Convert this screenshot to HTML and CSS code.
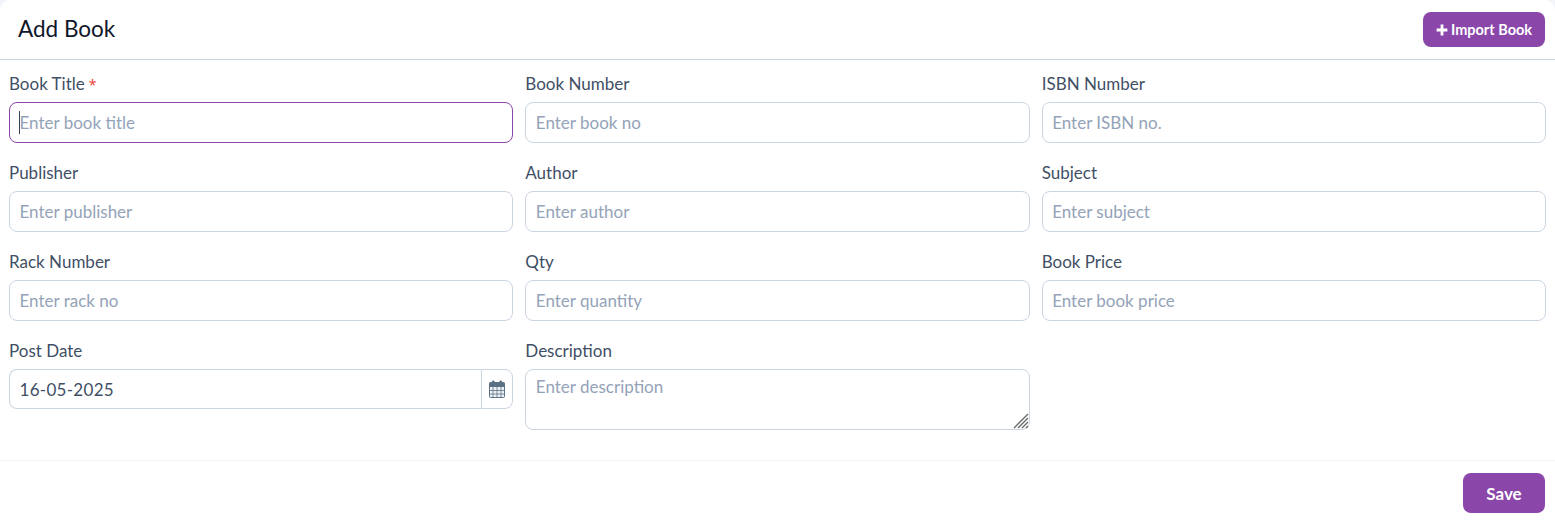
FILE: index.html
```html
<!DOCTYPE html>
<html lang="en">
<head>
    <meta charset="UTF-8">
    <title>Add Book</title>
    <link rel="stylesheet" href="styles.css">
</head>
<body>
    <div class="card">
        <!-- Header -->
        <div class="card-header">
            <h1 class="card-title">Add Book</h1>
            <a href="#" class="btn btn-import">
                <svg class="plus-icon" viewBox="0 0 12 12" aria-hidden="true"><path d="M4.6 0.6h2.8v4h4v2.8h-4v4H4.6v-4h-4V4.6h4z"/></svg>
                Import Book
            </a>
        </div>

        <!-- Form -->
        <form class="card-body">
            <div class="form-group">
                <label for="title">Book Title<span class="required">*</span></label>
                <div class="field">
                    <input id="title" class="form-control" type="text" placeholder="Enter book title" autofocus>
                    <span class="caret"></span>
                </div>
            </div>
            <div class="form-group">
                <label for="number">Book Number</label>
                <input id="number" class="form-control" type="text" placeholder="Enter book no">
            </div>
            <div class="form-group">
                <label for="isbn">ISBN Number</label>
                <input id="isbn" class="form-control" type="text" placeholder="Enter ISBN no.">
            </div>
            <div class="form-group">
                <label for="publisher">Publisher</label>
                <input id="publisher" class="form-control" type="text" placeholder="Enter publisher">
            </div>
            <div class="form-group">
                <label for="author">Author</label>
                <input id="author" class="form-control" type="text" placeholder="Enter author">
            </div>
            <div class="form-group">
                <label for="subject">Subject</label>
                <input id="subject" class="form-control" type="text" placeholder="Enter subject">
            </div>
            <div class="form-group">
                <label for="rack">Rack Number</label>
                <input id="rack" class="form-control" type="text" placeholder="Enter rack no">
            </div>
            <div class="form-group">
                <label for="qty">Qty</label>
                <input id="qty" class="form-control" type="text" placeholder="Enter quantity">
            </div>
            <div class="form-group">
                <label for="price">Book Price</label>
                <input id="price" class="form-control" type="text" placeholder="Enter book price">
            </div>
            <div class="form-group">
                <label for="date">Post Date</label>
                <div class="input-group">
                    <input id="date" class="form-control date-input" type="text" value="16-05-2025">
                    <span class="input-addon">
                        <svg class="calendar-icon" viewBox="0 0 16 18" aria-hidden="true">
                            <rect class="cal-frame" x="0.5" y="2.5" width="15" height="15" rx="1"/>
                            <rect class="cal-band" x="0.5" y="2.5" width="15" height="4.5"/>
                            <rect class="cal-band" x="3" y="0.5" width="2.5" height="4.5" rx="1"/>
                            <rect class="cal-band" x="10.5" y="0.5" width="2.5" height="4.5" rx="1"/>
                            <path class="cal-grid" d="M4 7v10M8 7v10M12 7v10M1 10.5h14M1 14h14"/>
                        </svg>
                    </span>
                </div>
            </div>
            <div class="form-group">
                <label for="description">Description</label>
                <div class="field">
                    <textarea id="description" class="form-control form-textarea" placeholder="Enter description"></textarea>
                    <svg class="grip" viewBox="0 0 16 16" aria-hidden="true">
                        <path d="M1 15L15 1M5 15L15 5M9 15l6-6M13 15l2-2"/>
                    </svg>
                </div>
            </div>
        </form>

        <!-- Footer -->
        <div class="card-footer">
            <button type="button" class="btn btn-save">Save</button>
        </div>
    </div>
</body>
</html>
```

FILE: styles.css
```css
body {
    background-color: #f1f5f9;
    font-family: Lato, "Noto Sans", Arial, sans-serif;
    margin: 0;
    padding: 0;
    color: #334155;
}

.card {
    background-color: #fff;
    border-radius: 10px 10px 0 0;
    height: 522px;
    box-sizing: border-box;
    overflow: hidden;
}

/* Header */
.card-header {
    display: flex;
    justify-content: space-between;
    align-items: center;
    height: 60px;
    box-sizing: border-box;
    padding: 0 10px 0 18px;
    border-bottom: 1px solid #cbd5e1;
}

.card-title {
    margin: 0 0 3px;
    font-size: 22.5px;
    font-weight: 400;
    color: #0f172a;
}

.btn {
    background-color: #8a46a9;
    color: #fff;
    border: none;
    border-radius: 8px;
    text-decoration: none;
    font-family: inherit;
    font-weight: 700;
    display: flex;
    align-items: center;
    justify-content: center;
}

.btn-import {
    width: 122px;
    height: 35px;
    font-size: 14.5px;
    gap: 3px;
}

.plus-icon {
    width: 12px;
    height: 12px;
    fill: #fff;
}

/* Form grid */
.card-body {
    display: grid;
    grid-template-columns: repeat(3, 1fr);
    column-gap: 12px;
    grid-auto-rows: 89px;
    padding: 13px 9px 0;
    height: 400px;
    box-sizing: border-box;
    align-content: start;
}

.form-group {
    display: flex;
    flex-direction: column;
}

.form-group label {
    font-size: 17px;
    line-height: 22px;
    margin-bottom: 7px;
    color: #3f4f66;
}

.required {
    color: #ef4444;
    margin-left: 4px;
    font-family: "Noto Sans", sans-serif;
    font-size: 14px;
    line-height: 0;
}

.field {
    position: relative;
}

.caret {
    position: absolute;
    left: 10px;
    top: 9px;
    width: 1px;
    height: 23px;
    background-color: #334155;
}

.form-control {
    display: block;
    width: 100%;
    height: 41px;
    box-sizing: border-box;
    border: 1px solid #cbd5e1;
    border-radius: 8px;
    padding: 0 10px 0 9.5px;
    font-family: inherit;
    font-size: 17px;
    color: #3f4f66;
    background-color: #fff;
    outline: none;
}

.form-control::placeholder {
    color: #94a3b8;
    opacity: 1;
}

.form-control:focus {
    border-color: #8a46a9;
}

.input-group {
    display: flex;
}

.input-group .form-control {
    height: 40px;
    border-radius: 8px 0 0 8px;
    border-right: none;
}

.date-input {
    letter-spacing: 0.3px;
}

.input-addon {
    flex: none;
    width: 32px;
    height: 40px;
    box-sizing: border-box;
    border: 1px solid #cbd5e1;
    border-radius: 0 8px 8px 0;
    display: flex;
    align-items: center;
    justify-content: center;
}

.calendar-icon {
    width: 16px;
    height: 18px;
}

.cal-frame {
    fill: #eef2f6;
    stroke: #5b7186;
}

.cal-band {
    fill: #5b7186;
}

.cal-grid {
    fill: none;
    stroke: #5b7186;
    stroke-width: 0.8;
}

.form-textarea {
    height: 61px;
    padding-top: 6px;
    padding-bottom: 6px;
    line-height: 22px;
    resize: none;
}

.grip {
    position: absolute;
    right: 1px;
    bottom: 1px;
    width: 16px;
    height: 16px;
    fill: none;
    stroke: #6b6b6b;
    stroke-width: 1.4;
}

/* Footer */
.card-footer {
    display: flex;
    justify-content: flex-end;
    padding: 12px 10px 0;
    border-top: 1px solid #f1f5f9;
}

.btn-save {
    width: 82px;
    height: 40px;
    font-size: 17px;
}
```
